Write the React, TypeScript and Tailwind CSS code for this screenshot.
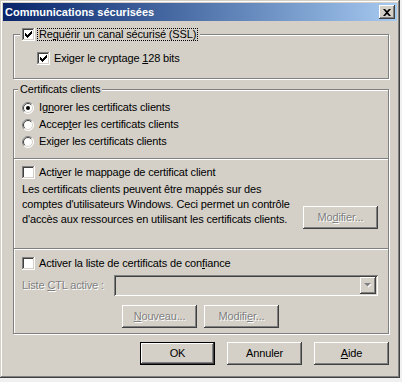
import type { ReactNode } from "react";

const face = "font-['Liberation_Sans',Arial,sans-serif] text-[11px] leading-[13px] tracking-[-0.15px] text-black";
const raised =
  "bg-[#d4d0c8] shadow-[inset_-1px_-1px_0_#404040,inset_1px_1px_0_#ffffff,inset_-2px_-2px_0_#808080,inset_2px_2px_0_#d4d0c8]";
const etched = "border border-[#808080] shadow-[inset_1px_1px_0_#ffffff,1px_1px_0_#ffffff]";
const greyed = "text-[#808080] [text-shadow:1px_1px_0_#ffffff]";

function U({ children }: { children: ReactNode }) {
  return <span className="underline underline-offset-[1px]">{children}</span>;
}

function Check({ on }: { on?: boolean }) {
  return (
    <svg width="13" height="13" viewBox="0 0 13 13" className="shrink-0">
      <rect x="0" y="0" width="13" height="13" fill="#ffffff" />
      <path d="M0 0H12V1H1V12H0Z" fill="#808080" />
      <path d="M1 1H11V2H2V11H1Z" fill="#404040" />
      <path d="M11 1H12V12H1V11H11Z" fill="#d4d0c8" />
      {on && (
        <g fill="#000000">
          <rect x="3" y="5" width="1" height="3" />
          <rect x="4" y="6" width="1" height="3" />
          <rect x="5" y="7" width="1" height="3" />
          <rect x="6" y="6" width="1" height="3" />
          <rect x="7" y="5" width="1" height="3" />
          <rect x="8" y="4" width="1" height="3" />
          <rect x="9" y="3" width="1" height="3" />
        </g>
      )}
    </svg>
  );
}

function Radio({ on }: { on?: boolean }) {
  return (
    <svg width="12" height="12" viewBox="0 0 12 12" className="shrink-0">
      <circle cx="6" cy="6" r="5.5" fill="#ffffff" />
      <path d="M2.1 9.9A5.5 5.5 0 0 1 9.9 2.1" fill="none" stroke="#808080" strokeWidth="1" />
      <path d="M9.9 2.1A5.5 5.5 0 0 1 2.1 9.9" fill="none" stroke="#ffffff" strokeWidth="1" />
      <path d="M2.8 9.2A4.5 4.5 0 0 1 9.2 2.8" fill="none" stroke="#404040" strokeWidth="1" />
      <path d="M9.2 2.8A4.5 4.5 0 0 1 2.8 9.2" fill="none" stroke="#d4d0c8" strokeWidth="1" />
      {on && <circle cx="6" cy="6" r="2" fill="#000000" />}
    </svg>
  );
}

function Btn({ children, off, main }: { children: ReactNode; off?: boolean; main?: boolean }) {
  return (
    <div
      className={
        main
          ? "w-[75px] h-[23px] border border-black bg-[#d4d0c8] shadow-[inset_-1px_-1px_0_#404040,inset_1px_1px_0_#ffffff,inset_-2px_-2px_0_#808080] flex items-center justify-center"
          : `w-[75px] h-[23px] ${raised} flex items-center justify-center`
      }
    >
      <span className={off ? greyed : ""}>{children}</span>
    </div>
  );
}

export default function App() {
  return (
    <div className={`w-[402px] h-[382px] bg-[#f0f0f0] ${face}`}>
      <div className="w-[400px] h-[378px] p-[3px] flex flex-col bg-[#d4d0c8] shadow-[inset_-1px_-1px_0_#404040,inset_1px_1px_0_#d4d0c8,inset_-2px_-2px_0_#808080,inset_2px_2px_0_#ffffff]">
        {/* barre de titre */}
        <div className="h-[18px] flex items-center justify-between pl-[2px] pr-[2px] bg-gradient-to-r from-[#0a246a] to-[#a6caf0]">
          <span className="font-bold text-white tracking-normal">Communications sécurisées</span>
          <div className={`w-[16px] h-[14px] ${raised} flex items-center justify-center`}>
            <svg width="8" height="7" viewBox="0 0 8 7">
              <path d="M0 0H2L4 2L6 0H8L5 3.5L8 7H6L4 5L2 7H0L3 3.5Z" fill="#000000" />
            </svg>
          </div>
        </div>

        <div className="flex-1 flex flex-col pl-[10px] pr-[8px]">
          {/* SSL */}
          <div className={`relative mt-[13px] h-[45px] ${etched} pt-[17px] pl-[23px]`}>
            <div className="absolute left-[6px] top-[-7px] pl-[2px] pr-[2px] bg-[#d4d0c8] flex items-center gap-[2px]">
              <Check on />
              <span className="border border-dotted border-black px-[1px] leading-[11px]">
                Re<U>q</U>uérir un canal sécurisé (SSL)
              </span>
            </div>
            <div className="flex items-center gap-[4px]">
              <Check on />
              <span>
                Exiger le cryptage <U>1</U>28 bits
              </span>
            </div>
          </div>

          {/* certificats */}
          <div className={`relative mt-[10px] h-[245px] ${etched} flex flex-col`}>
            <div className="absolute left-[4px] top-[-7px] px-[2px] bg-[#d4d0c8]">Certificats clients</div>

            <div className="pt-[9px] pl-[8px] flex flex-col">
              <div className="h-[17px] flex items-center gap-[5px]">
                <Radio on />
                <span>
                  Ig<U>n</U>orer les certificats clients
                </span>
              </div>
              <div className="h-[17px] flex items-center gap-[5px]">
                <Radio />
                <span>
                  Accep<U>t</U>er les certificats clients
                </span>
              </div>
              <div className="h-[17px] flex items-center gap-[5px]">
                <Radio />
                <span>
                  Exi<U>g</U>er les certificats clients
                </span>
              </div>
            </div>

            <div className="mt-[8px] h-[2px] border-t border-[#808080] border-b border-b-white" />

            <div className="mt-[6px] pl-[8px] h-[13px] flex items-center gap-[4px]">
              <Check />
              <span>
                Acti<U>v</U>er le mappage de certificat client
              </span>
            </div>
            <div className="flex justify-between pl-[8px] pr-[10px]">
              <p className="mt-[3px] leading-[15px]">
                Les certificats clients peuvent être mappés sur des
                <br />
                comptes d'utilisateurs Windows. Ceci permet un contrôle
                <br />
                d'accès aux ressources en utilisant les certificats clients.
              </p>
              <div className="mt-[27px]">
                <Btn off>
                  Mo<U>d</U>ifier...
                </Btn>
              </div>
            </div>

            <div className="mt-[19px] h-[2px] border-t border-[#808080] border-b border-b-white" />

            <div className="mt-[7px] pl-[8px] h-[13px] flex items-center gap-[4px]">
              <Check />
              <span>
                Activer la liste de certificats de con<U>f</U>iance
              </span>
            </div>
            <div className="mt-[5px] pl-[8px] pr-[10px] h-[21px] flex items-center">
              <span className={`w-[92px] ${greyed}`}>
                Liste <U>C</U>TL active :
              </span>
              <div className="flex-1 h-[21px] bg-[#d4d0c8] shadow-[inset_1px_1px_0_#808080,inset_-1px_-1px_0_#ffffff,inset_2px_2px_0_#404040,inset_-2px_-2px_0_#d4d0c8] flex justify-end p-[2px]">
                <div className={`w-[16px] h-[17px] ${raised} flex items-center justify-center`}>
                  <svg width="8" height="5" viewBox="0 0 8 5">
                    <path d="M1 1H8L4.5 4.5Z" fill="#ffffff" />
                    <path d="M0 0H7L3.5 3.5Z" fill="#808080" />
                  </svg>
                </div>
              </div>
            </div>
            <div className="mt-[9px] pl-[108px] flex gap-[7px]">
              <Btn off>
                <U>N</U>ouveau...
              </Btn>
              <Btn off>
                Modifi<U>e</U>r...
              </Btn>
            </div>
          </div>

          {/* boutons */}
          <div className="mt-[8px] flex justify-end gap-[12px]">
            <Btn main>OK</Btn>
            <Btn>Annuler</Btn>
            <Btn>
              <U>A</U>ide
            </Btn>
          </div>
        </div>
      </div>
    </div>
  );
}
